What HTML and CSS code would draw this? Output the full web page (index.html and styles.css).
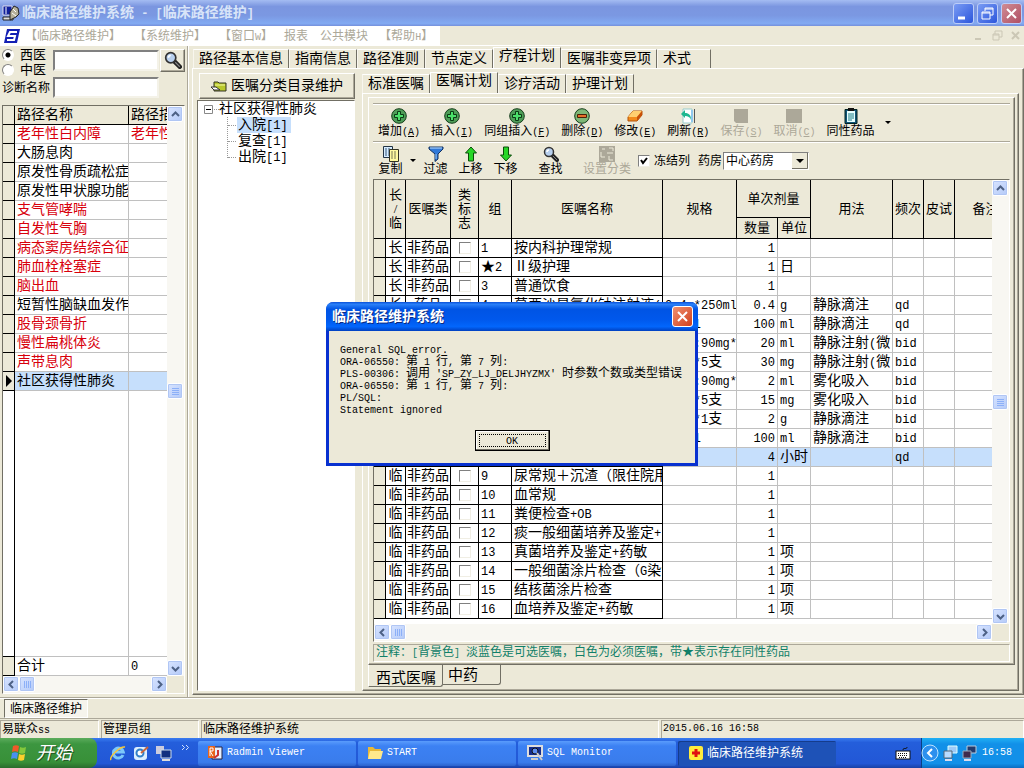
FILE: index.html
```html
<!DOCTYPE html>
<html lang="zh-CN">
<head>
    <meta charset="UTF-8">
    <title>临床路径维护系统</title>
    <link rel="stylesheet" href="styles.css">
</head>

<body>

<!-- Shared icons -->
<svg class="defs">
    <symbol id="i-up" viewBox="0 0 9 9"><path d="M1 6l3.500-3.500L8 6" fill="none" stroke="#4d6185" stroke-width="2"/></symbol>
    <symbol id="i-down" viewBox="0 0 9 9"><path d="M1 3l3.500 3.500L8 3" fill="none" stroke="#4d6185" stroke-width="2"/></symbol>
    <symbol id="i-left" viewBox="0 0 9 9"><path d="M6 1L2.500 4.500 6 8" fill="none" stroke="#4d6185" stroke-width="2"/></symbol>
    <symbol id="i-right" viewBox="0 0 9 9"><path d="M3 1l3.500 3.500L3 8" fill="none" stroke="#4d6185" stroke-width="2"/></symbol>
    <symbol id="i-grip" viewBox="0 0 9 9"><path d="M1 1.500h7M1 3.500h7M1 5.500h7M1 7.500h7" stroke="#8cb0f8"/></symbol>
    <symbol id="i-griph" viewBox="0 0 9 9"><path d="M1.500 1v7M3.500 1v7M5.500 1v7M7.500 1v7" stroke="#8cb0f8"/></symbol>
    <symbol id="i-find" viewBox="0 0 16 16">
        <path d="M9 9l5 5" stroke="#222" stroke-width="4" stroke-linecap="round"/>
        <path d="M10 10l4 4" stroke="#888" stroke-width="1"/>
        <circle cx="6" cy="6" r="4.500" fill="#b8d0ee" stroke="#333" stroke-width="1.500"/>
        <path d="M4 6a2 2 0 0 1 2-2" stroke="#fff" stroke-width="1.500" fill="none"/>
    </symbol>
    <symbol id="i-add" viewBox="0 0 16 16">
        <circle cx="8" cy="8" r="7.300" fill="#4f9d58" stroke="#153d1b"/>
        <path d="M6.500 3.500h3v3h3v3h-3v3h-3v-3h-3v-3h3z" fill="#4be06a" stroke="#0b3b14"/>
    </symbol>
    <symbol id="i-del" viewBox="0 0 16 16">
        <circle cx="8" cy="8" r="7.300" fill="#7fb877" stroke="#153d1b"/>
        <path d="M3.500 6.500h9v3h-9z" fill="#e5702a" stroke="#4b2008"/>
    </symbol>
    <symbol id="i-edit" viewBox="0 0 16 16">
        <path d="M1 9l5-6h9v4l-5 6H1z" fill="#f28a1c" stroke="#b25408"/>
        <path d="M1 9l5-6h9l-5 6z" fill="#ffcf70"/>
        <path d="M10 9l5-6v4l-5 6z" fill="#c8500a"/>
    </symbol>
    <symbol id="i-refresh" viewBox="0 0 16 16">
        <path d="M3 1h9v14H3z" fill="#fff" stroke="#9cc"/>
        <path d="M14.500 1v14" stroke="#555"/><path d="M12 2v12" stroke="#8fc8ee" stroke-width="2"/>
        <path d="M1 6l4-4v3c4 0 6 2 6 7-1-3-3-4-6-4v2z" fill="#20b890"/>
    </symbol>
    <symbol id="i-clip" viewBox="0 0 16 16">
        <path d="M2 1.500h12v14H2z" fill="#157" stroke="#022"/>
        <path d="M4 3h8v11H4z" fill="#e8ffff"/><path d="M5 0h6v3H5z" fill="#111"/>
        <path d="M5 6h6M5 8h6M5 10h6M5 12h4" stroke="#1a7c86"/>
    </symbol>
    <symbol id="i-copy" viewBox="0 0 16 16">
        <path d="M.5.500h9v11h-9z" fill="#d6ecff" stroke="#234"/>
        <path d="M2 3h6M2 5h6M2 7h4M2 9h4" stroke="#357" stroke-dasharray="2 1"/>
        <path d="M6.500 3.500h9v12h-9z" fill="#fff9a0" stroke="#332"/>
        <path d="M8 6h6M8 8h6M8 10h6M8 12h6" stroke="#775" stroke-dasharray="2 1"/>
    </symbol>
    <symbol id="i-filter" viewBox="0 0 16 16">
        <path d="M1 1h14v2L10 8v5l-3 2.500V8L1 3z" fill="#2f78d8" stroke="#12315f"/>
        <path d="M2 2h12" stroke="#bfe0ff"/><path d="M8 8v5" stroke="#9cf"/>
    </symbol>
    <symbol id="i-moveup" viewBox="0 0 16 16"><path d="M8 1l5.500 6H10.500v8h-5V7H2.500z" fill="#27d627" stroke="#0a4d0a"/></symbol>
    <symbol id="i-movedn" viewBox="0 0 16 16"><path d="M8 15L2.500 9h3V1h5v8h3z" fill="#27d627" stroke="#0a4d0a"/></symbol>
    <symbol id="i-class" viewBox="0 0 16 16"><path d="M0 0h16v16H0z" fill="#aca899"/><path d="M3 3h3M10 2h4v3M2 6v5h4M8 7h6M10 10v4h4" stroke="#ece9d8" fill="none"/></symbol>
</svg>

<header class="titlebar">
    <svg width="18" height="18" viewBox="0 0 18 18">
        <path d="M1 2h9v9H1z" fill="#10209c" stroke="#dde"/><path d="M4 3v7" stroke="#fff"/>
        <path d="M1 13h10v3H1z" fill="#ddd" stroke="#222"/>
        <path d="M8 8l4-6 4 2 1 6-3 3-6 3z" fill="#b5b09a" stroke="#222"/><path d="M11 5l3 3M10 9l4 3" stroke="#fff"/>
    </svg>
    <h1>临床路径维护系统<span class="mono14"> - [</span>临床路径维护<span class="mono14">]</span></h1>
    <button class="wbtn" aria-label="最小化"><svg width="19" height="19"><path d="M4 14h7" stroke="#fff" stroke-width="3"/></svg></button>
    <button class="wbtn" aria-label="还原"><svg width="19" height="19"><path d="M7 7V4h8v7h-3M7 5h8M4 8h8v7H4zM4 9h8" stroke="#fff" fill="none"/></svg></button>
    <button class="wbtn close" aria-label="关闭"><svg width="19" height="19"><path d="M5 5l9 9M14 5l-9 9" stroke="#fff" stroke-width="2"/></svg></button>
</header>

<nav class="menubar">
    <div class="menus">
        <svg width="18" height="16" viewBox="0 0 18 16"><path d="M4 1h13l-3 14H1z" fill="#1420b4"/><path d="M14 4H7L5 8h7l-1 4H4" stroke="#fff" stroke-width="2" fill="none"/></svg>
        <a href="#">【临床路径维护】</a>
        <a href="#">【系统维护】</a>
        <a href="#">【窗口<span class="mono12">W</span>】</a>
        <a href="#" class="plain">报表</a>
        <a href="#" class="plain next">公共模块</a>
        <a href="#">【帮助<span class="mono12">H</span>】</a>
    </div>
    <svg width="48" height="12" viewBox="0 0 48 12"><path d="M2 9h6" stroke="#cbc7b5" stroke-width="2"/><path d="M22 4V1h7v6h-3M20 4h6v6h-6zM20 5h6" stroke="#cbc7b5" fill="none"/><path d="M39 2l7 7M46 2l-7 7" stroke="#cbc7b5" stroke-width="2"/></svg>
</nav>

<main class="work">

    <!-- Path list -->
    <section class="side">
        <form class="search">
            <div class="kinds">
                <label><input type="radio" name="kind" checked>西医</label>
                <label><input type="radio" name="kind">中医</label>
            </div>
            <input type="text" class="box" aria-label="路径">
            <button type="button" class="findbtn" aria-label="查找"><svg width="18" height="18"><use href="#i-find"/></svg></button>
            <label for="diag">诊断名称</label>
            <input type="text" class="box" id="diag">
        </form>
        <div class="scrollgrid">
            <div class="view">
                <table class="paths">
                    <colgroup><col class="c-gut"><col class="c-pname"><col></colgroup>
                    <thead><tr><th></th><th>路径名称</th><th>路径描述</th></tr></thead>
                    <tbody>
                        <tr class="red"><td></td><td>老年性白内障</td><td>老年性白内障</td></tr>
                        <tr><td></td><td>大肠息肉</td><td></td></tr>
                        <tr><td></td><td>原发性骨质疏松症</td><td></td></tr>
                        <tr><td></td><td>原发性甲状腺功能</td><td></td></tr>
                        <tr class="red"><td></td><td>支气管哮喘</td><td></td></tr>
                        <tr class="red"><td></td><td>自发性气胸</td><td></td></tr>
                        <tr class="red"><td></td><td>病态窦房结综合征</td><td></td></tr>
                        <tr class="red"><td></td><td>肺血栓栓塞症</td><td></td></tr>
                        <tr class="red"><td></td><td>脑出血</td><td></td></tr>
                        <tr><td></td><td>短暂性脑缺血发作</td><td></td></tr>
                        <tr class="red"><td></td><td>股骨颈骨折</td><td></td></tr>
                        <tr class="red"><td></td><td>慢性扁桃体炎</td><td></td></tr>
                        <tr class="red"><td></td><td>声带息肉</td><td></td></tr>
                        <tr class="sel"><td><svg width="7" height="12"><path d="M1 0l6 6-6 6z"/></svg></td><td>社区获得性肺炎</td><td></td></tr>
                        <tr class="fill"><td></td><td></td><td></td></tr>
                    </tbody>
                    <tfoot><tr><td></td><td>合计</td><td><span class="mono14">0</span></td></tr></tfoot>
                </table>
            </div>
            <div class="vbar">
                <button class="sb" aria-label="上"><svg width="9" height="9"><use href="#i-up"/></svg></button>
                <span class="track pos-a"><button class="sb" aria-label="滚动"><svg width="9" height="9"><use href="#i-grip"/></svg></button></span>
                <button class="sb" aria-label="下"><svg width="9" height="9"><use href="#i-down"/></svg></button>
            </div>
            <div class="hbar">
                <button class="sb" aria-label="左"><svg width="9" height="9"><use href="#i-left"/></svg></button>
                <button class="sb" aria-label="滚动"><svg width="9" height="9"><use href="#i-griph"/></svg></button>
                <span class="track"></span>
                <button class="sb" aria-label="右"><svg width="9" height="9"><use href="#i-right"/></svg></button>
            </div>
        </div>
    </section>

    <section class="pages">
        <div class="tabs">
            <button>路径基本信息</button><button>指南信息</button><button>路径准则</button><button>节点定义</button><button class="on">疗程计划</button><button>医嘱非变异项</button><button class="last">术式</button>
        </div>
        <div class="page outer">

            <!-- Catalogue tree -->
            <div class="catalog">
                <button class="catbtn">
                    <svg width="16" height="14" viewBox="0 0 16 14"><path d="M3 3h4l1 1h7v8H3z" fill="#b8c82c" stroke="#332"/><path d="M4 6h10" stroke="#f4f9a0"/><path d="M0 8h5l4 3H3z" fill="#fff" stroke="#333"/></svg>
                    医嘱分类目录维护
                </button>
                <div class="tree">
                    <div class="root"><svg width="15" height="16"><path d="M.5 4.500h8v8h-8z" fill="#fff" stroke="#888"/><path d="M2 8.500h5" stroke="#000"/><path d="M10 8.500h5" stroke="#999" stroke-dasharray="1 1"/></svg>社区获得性肺炎</div>
                    <ul>
                        <li><span class="hit">入院<span class="mono14">[1]</span></span></li>
                        <li><span>复查<span class="mono14">[1]</span></span></li>
                        <li><span>出院<span class="mono14">[1]</span></span></li>
                    </ul>
                </div>
            </div>

            <div class="plan">
                <div class="tabs">
                    <button>标准医嘱</button><button class="on">医嘱计划</button><button>诊疗活动</button><button>护理计划</button>
                </div>
                <div class="page mid">
                    <div class="page inner">

                        <div class="toolbar">
                            <button><svg width="16" height="16"><use href="#i-add"/></svg><span>增加<i>(<u>A</u>)</i></span></button>
                            <button><svg width="16" height="16"><use href="#i-add"/></svg><span>插入<i>(<u>I</u>)</i></span></button>
                            <button><svg width="16" height="16"><use href="#i-add"/></svg><span>同组插入<i>(<u>F</u>)</i></span></button>
                            <button><svg width="16" height="16"><use href="#i-del"/></svg><span>删除<i>(<u>D</u>)</i></span></button>
                            <button><svg width="16" height="16"><use href="#i-edit"/></svg><span>修改<i>(<u>E</u>)</i></span></button>
                            <button><svg width="16" height="16"><use href="#i-refresh"/></svg><span>刷新<i>(<u>R</u>)</i></span></button>
                            <button disabled><svg width="16" height="16"><path d="M1 1h14v14H3l-2-2z" fill="#aca899"/></svg><span>保存<i>(<u>S</u>)</i></span></button>
                            <button disabled><svg width="16" height="16"><path d="M0 1h16v14H0z" fill="#aca899"/></svg><span>取消<i>(<u>C</u>)</i></span></button>
                            <button><svg width="16" height="16"><use href="#i-clip"/></svg><span>同性药品</span></button>
                            <span class="drop"></span>
                        </div>
                        <div class="toolbar second">
                            <button><svg width="16" height="16"><use href="#i-copy"/></svg><span>复制</span></button>
                            <span class="drop"></span>
                            <button><svg width="16" height="16"><use href="#i-filter"/></svg><span>过滤</span></button>
                            <button><svg width="16" height="16"><use href="#i-moveup"/></svg><span>上移</span></button>
                            <button><svg width="16" height="16"><use href="#i-movedn"/></svg><span>下移</span></button>
                            <button class="apart"><svg width="16" height="16"><use href="#i-find"/></svg><span>查找</span></button>
                            <button class="apart" disabled><svg width="16" height="16"><use href="#i-class"/></svg><span>设置分类</span></button>
                            <label class="freeze"><input type="checkbox" checked>冻结列</label>
                            <label for="store">药房</label>
                            <select id="store"><option>中心药房</option></select>
                        </div>

                        <div class="scrollgrid orders-box">
                            <div class="view">
                                <table class="orders">
                                    <colgroup>
                                        <col class="w11"><col class="w21"><col class="w45"><col class="w28"><col class="w33"><col class="w151"><col class="w74">
                                        <col class="w41"><col class="w33"><col class="w82"><col class="w31"><col class="w31"><col>
                                    </colgroup>
                                    <thead>
                                        <tr>
                                            <th rowspan="2"></th><th rowspan="2">长<br>/<br>临</th><th rowspan="2">医嘱类</th><th rowspan="2">类<br>标<br>志</th>
                                            <th rowspan="2">组</th><th rowspan="2">医嘱名称</th><th rowspan="2">规格</th><th colspan="2">单次剂量</th>
                                            <th rowspan="2">用法</th><th rowspan="2">频次</th><th rowspan="2">皮试</th><th rowspan="2">备注</th>
                                        </tr>
                                        <tr><th>数量</th><th>单位</th></tr>
                                    </thead>
                                    <tbody id="orders"></tbody>
                                </table>
                            </div>
                            <div class="vbar">
                                <button class="sb" aria-label="上"><svg width="9" height="9"><use href="#i-up"/></svg></button>
                                <span class="track pos-b"><button class="sb" aria-label="滚动"><svg width="9" height="9"><use href="#i-grip"/></svg></button></span>
                                <button class="sb" aria-label="下"><svg width="9" height="9"><use href="#i-down"/></svg></button>
                            </div>
                            <div class="hbar">
                                <button class="sb" aria-label="左"><svg width="9" height="9"><use href="#i-left"/></svg></button>
                                <button class="sb" aria-label="滚动"><svg width="9" height="9"><use href="#i-griph"/></svg></button>
                                <span class="track"></span>
                                <button class="sb" aria-label="右"><svg width="9" height="9"><use href="#i-right"/></svg></button>
                            </div>
                        </div>
                        <p class="note">注释：<span class="mono12">[</span>背景色<span class="mono12">] </span>淡蓝色是可选医嘱，白色为必须医嘱，带★表示存在同性药品</p>
                    </div>
                    <div class="foot-tabs"><button class="on">西式医嘱</button><button>中药</button></div>
                </div>
            </div>
        </div>
    </section>
</main>

<div class="windows"><button>临床路径维护</button></div>

<footer class="status">
    <span>易联众<span class="mono12">ss</span></span><span>管理员组</span><span>临床路径维护系统</span><span class="mono12">2015.06.16 16:58</span>
</footer>

<div class="taskbar">
    <button class="start">
        <svg width="20" height="18" viewBox="0 0 20 18"><path d="M3 2c2-1 4-1 6 0L8 8c-2-1-4-1-6 0z" fill="#f0592a"/><path d="M10 3c2 1 4 1 6 0l-1 6c-2 1-4 1-6 0z" fill="#84c83c"/><path d="M2 9c2-1 4-1 6 0l-1 6c-2-1-4-1-6 0z" fill="#4a90f0"/><path d="M9 10c2 1 4 1 6 0l-1 6c-2 1-4 1-6 0z" fill="#fcd02c"/></svg>
        开始
    </button>
    <div class="quick">
        <svg width="18" height="18" viewBox="0 0 18 18"><path d="M14 11a5 5 0 1 1 .3-3H5" fill="none" stroke="#7cc8fa" stroke-width="3"/><path d="M2 16c-2-3 9-14 14-13" fill="none" stroke="#f8c838" stroke-width="1.500"/></svg>
        <svg width="18" height="18" viewBox="0 0 18 18"><rect x="2" y="3" width="13" height="13" rx="3" fill="#dcefff"/><circle cx="8" cy="9" r="3.500" fill="#fff" stroke="#3280c8" stroke-width="2"/><path d="M9 9l7-6" stroke="#c8643c" stroke-width="2"/></svg>
        <svg width="18" height="18" viewBox="0 0 18 18"><path d="M1 2h8v8H1z" fill="#ccd"/><path d="M6 6h10v8H6z" fill="#103080" stroke="#cde"/><path d="M7 16h8" stroke="#ddd" stroke-width="2"/></svg>
        <svg class="more" width="9" height="7" viewBox="0 0 9 7"><path d="M1 1l2.500 2.500L1 6M5 1l2.500 2.500L5 6" fill="none" stroke="#cfe0ff"/></svg>
    </div>
    <div class="tasks">
        <button><svg width="16" height="16" viewBox="0 0 16 16"><path d="M5 2h10v12H5z" fill="#e8f0ff" stroke="#224"/><path d="M1 1h7v12H1z" fill="#e8641c"/><path d="M3 11V3h3v3H3l3 5" stroke="#fff" fill="none"/><path d="M11 5v5l-4 3" stroke="#c33" fill="none" stroke-width="2"/></svg><span class="mono12">Radmin Viewer</span></button>
        <button><svg width="16" height="16" viewBox="0 0 16 16"><path d="M1 2h5l2 2h6v10H1z" fill="#e8b838"/><path d="M3 6h13l-2 8H1z" fill="#ffe88c"/></svg><span class="mono12">START</span></button>
        <button><svg width="16" height="16" viewBox="0 0 16 16"><path d="M1 1h14v10H1z" fill="#142c8c" stroke="#ddd" stroke-width="2"/><circle cx="8" cy="6" r="3" fill="#5c8cf0" stroke="#111"/><path d="M10 8l5 7M4 14h7" stroke="#ccc" stroke-width="2"/></svg><span class="mono12">SQL Monitor</span></button>
        <button class="on"><svg width="14" height="14" viewBox="0 0 14 14"><rect width="14" height="14" rx="2" fill="#ffec3c"/><path d="M7 3v8M3 7h8" stroke="#e01010" stroke-width="3"/></svg><span>临床路径维护系统</span></button>
    </div>
    <svg class="kbd" width="16" height="14" viewBox="0 0 16 14"><path d="M8 4c0-3 4 0 4-3" stroke="#111" fill="none"/><rect x="1" y="5" width="14" height="8" fill="#fff" stroke="#111"/><path d="M3 7.500h10M3 9.500h10M4 11.500h8" stroke="#111" stroke-dasharray="1 1"/></svg>
    <div class="tray">
        <svg class="fold" width="18" height="18" viewBox="0 0 18 18"><circle cx="9" cy="9" r="8" fill="#2c90ee" stroke="#bfe4ff"/><path d="M11 5L7 9l4 4" stroke="#fff" stroke-width="2" fill="none"/></svg>
        <svg width="15" height="16" viewBox="0 0 15 16"><path d="M5 1h9v7H5z" fill="#9ccaf8" stroke="#dff"/><path d="M1 6h8v7H1z" fill="#b8dcff" stroke="#567"/><path d="M2 15h7" stroke="#dde" stroke-width="2"/></svg>
        <svg width="15" height="16" viewBox="0 0 15 16"><path d="M5 1h9v7H5z" fill="#223a6c" stroke="#bcd"/><path d="M1 6h8v7H1z" fill="#402a4c" stroke="#9ab"/><path d="M2 15h7" stroke="#dde" stroke-width="2"/></svg>
        <span class="mono12">16:58</span>
    </div>
</div>

<!-- Error message -->
<div class="overlay">
    <div class="dialog" role="alertdialog" aria-labelledby="dlgtitle">
        <div class="dlg-head"><h2 id="dlgtitle">临床路径维护系统</h2><button class="wbtn close" aria-label="关闭"><svg width="19" height="19"><path d="M5 5l9 9M14 5l-9 9" stroke="#fff" stroke-width="2"/></svg></button></div>
        <div class="dlg-body">
            <p id="message">General SQL error.
ORA-06550: 第 1 行, 第 7 列:
PLS-00306: 调用 'SP_ZY_LJ_DELJHYZMX' 时参数个数或类型错误
ORA-06550: 第 1 行, 第 7 列:
PL/SQL:
Statement ignored</p>
            <button class="ok"><span class="mono12">OK</span></button>
        </div>
    </div>
</div>

<script>
    // 长/临, 医嘱类, 组, 名称, 规格, 数量, 单位, 用法, 频次
    const orders = [
        ["长", "非药品", "1", "按内科护理常规", "", "1", "", "", ""],
        ["长", "非药品", "★2", "Ⅱ级护理", "", "1", "日", "", ""],
        ["长", "非药品", "3", "普通饮食", "", "1", "", "", ""],
        ["长", "药品", "4", "莫西沙星氯化钠注射液(", "0.4g*250ml", "0.4", "g", "静脉滴注", "qd"],
        ["长", "药品", "5", "氯化钠注射液", "100ml", "100", "ml", "静脉滴注", "qd"],
        ["长", "药品", "5", "氯化钠注射液", "10ml:90mg*", "20", "ml", "静脉注射(微", "bid"],
        ["长", "药品", "5", "氨溴索注射液", "30mg*5支", "30", "mg", "静脉注射(微", "bid"],
        ["长", "药品", "6", "氯化钠注射液", "10ml:90mg*", "2", "ml", "雾化吸入", "bid"],
        ["长", "药品", "6", "氨溴索注射液", "15mg*5支", "15", "mg", "雾化吸入", "bid"],
        ["长", "药品", "7", "头孢注射液", "1.5g*1支", "2", "g", "静脉滴注", "bid"],
        ["长", "药品", "7", "氯化钠注射液", "100ml", "100", "ml", "静脉滴注", "bid"],
        ["长", "非药品", "8", "吸氧", "", "4", "小时", "", "qd"],
        ["临", "非药品", "9", "尿常规＋沉渣（限住院用）", "", "1", "", "", ""],
        ["临", "非药品", "10", "血常规", "", "1", "", "", ""],
        ["临", "非药品", "11", "粪便检查+OB", "", "1", "", "", ""],
        ["临", "非药品", "12", "痰一般细菌培养及鉴定+", "", "1", "", "", ""],
        ["临", "非药品", "13", "真菌培养及鉴定+药敏", "", "1", "项", "", ""],
        ["临", "非药品", "14", "一般细菌涂片检查（G染色）", "", "1", "项", "", ""],
        ["临", "非药品", "15", "结核菌涂片检查", "", "1", "项", "", ""],
        ["临", "非药品", "16", "血培养及鉴定+药敏", "", "1", "项", "", ""]
    ];

    // Latin runs are set in the half-width face
    function halfWidth(text, cls) {
        return text.replace(/[ -~]+/g, m => `<span class="${cls}">${m}</span>`);
    }

    document.getElementById("orders").innerHTML = orders.map((row, i) => {
        const [term, kind, ...rest] = row.map(t => halfWidth(t, "mono14"));
        const cells = rest.map((t, n) => `<td${n === 3 ? ' class="num"' : ""}>${t}</td>`).join("");
        return `<tr${i === 11 ? ' class="sel"' : ""}><td></td><td>${term}</td><td>${kind}</td>` +
            `<td><input type="checkbox" aria-label="类标志"></td>${cells}<td></td><td></td></tr>`;
    }).join("");

    const message = document.getElementById("message");
    message.innerHTML = halfWidth(message.textContent, "mono12");
</script>

</body>
</html>
```

FILE: styles.css
```css
* {
    box-sizing: border-box;
}
body {
    margin: 0;
    height: 100vh;
    display: flex;
    flex-direction: column;
    overflow: hidden;
    background: #ece9d8;
    color: #000;
    font-family: "Liberation Serif", "Noto Sans CJK SC", sans-serif;
    font-size: 12px;
    line-height: 14px;
}
button, input, select {
    font: inherit;
    color: inherit;
    margin: 0;
    padding: 0;
    border: 0;
    border-radius: 0;
}
button {
    background: none;
    white-space: nowrap;
}
svg {
    display: block;
    flex: none;
}
h1, h2, p, ul {
    margin: 0;
    padding: 0;
}
a {
    color: inherit;
    text-decoration: none;
}
.defs {
    display: none;
}
.mono14 {
    font-family: "Liberation Mono", monospace;
    font-size: 12px;
}
.mono12 {
    font-family: "Liberation Mono", monospace;
    font-size: 10px;
}

/* Title and menu */
.titlebar {
    flex: none;
    height: 26px;
    display: flex;
    align-items: center;
    gap: 2px;
    padding: 0 2px;
    background: linear-gradient(#a4bcf2, #7b96e0 25%, #7b98e2 60%, #82aaf2 90%, #7590dc);
}
.titlebar h1 {
    flex: 1;
    font-size: 14px;
    color: #d8e4f8;
    white-space: pre;
}
.wbtn {
    width: 21px;
    height: 21px;
    border: 1px solid #fff;
    border-radius: 3px;
    background: linear-gradient(135deg, #7a9cf4, #2c56dc);
}
.titlebar .wbtn {
    border-color: #bccdf8;
    margin-left: 1px;
}
.wbtn.close {
    background: linear-gradient(135deg, #f09070, #d0401c);
}
.titlebar .wbtn.close {
    background: linear-gradient(135deg, #d08c94, #b05064);
}
.menubar {
    flex: none;
    height: 20px;
    display: flex;
    justify-content: space-between;
    align-items: center;
    padding-right: 3px;
    border-bottom: 1px solid #fff;
    color: #aca899;
}
.menus {
    display: flex;
    align-items: center;
    height: 19px;
    width: 440px;
    padding-left: 3px;
    background: #fff;
    white-space: nowrap;
}
.menus a {
    height: 14px;
    margin-left: 4px;
    margin-right: 9px;
}
.menus .plain {
    margin: 0 0 0 2px;
}
.menus .next {
    margin: 0 7px 0 12px;
}

/* Side panel */
.work {
    flex: 1;
    min-height: 0;
    display: flex;
    gap: 4px;
}
.side {
    flex: none;
    width: 188px;
    padding: 2px 2px 3px;
    display: flex;
    flex-direction: column;
    gap: 6px;
    border-right: 1px solid #aca899;
    box-shadow: 1px 0 #fff;
}
.search {
    display: grid;
    grid-template-columns: 50px 1fr 25px;
    grid-template-rows: 24px 23px;
    align-items: center;
    row-gap: 4px;
    column-gap: 1px;
    height: 51px;
}
.kinds {
    line-height: 15px;
    font-size: 13px;
    padding-top: 4px;
}
.kinds label {
    display: flex;
    align-items: center;
    gap: 6px;
    height: 15px;
}
.kinds input {
    appearance: none;
    width: 12px;
    height: 12px;
    border: 1px solid;
    border-color: #808080 #fff #fff #808080;
    border-radius: 50%;
    background: #fff;
}
.kinds input:checked {
    background: radial-gradient(circle, #000 2px, #fff 3px);
}
.box {
    width: 100%;
    min-width: 0;
    height: 21px;
    background: #fff;
    border: 2px solid;
    border-color: #808080 #f4f2e8 #f4f2e8 #808080;
}
.findbtn, .catbtn {
    border: 1px solid;
    border-color: #fff #716f64 #716f64 #fff;
    box-shadow: inset -1px -1px #aca899;
}
.findbtn {
    height: 23px;
    padding-left: 3px;
}

/* Grids with XP scrollbars */
.scrollgrid {
    flex: 1;
    min-height: 0;
    display: grid;
    grid-template-columns: minmax(0, 1fr) 17px;
    grid-template-rows: minmax(0, 1fr) 17px;
    border: 1px solid #716f64;
    border-right-color: #fff;
    border-bottom-color: #fff;
}
.view {
    overflow: hidden;
    background: #fff;
}
.vbar, .hbar {
    display: flex;
    background: #f8f7f2;
}
.vbar {
    flex-direction: column;
}
.sb {
    flex: none;
    width: 16px;
    height: 16px;
    display: grid;
    place-items: center;
    border: 1px solid #fff;
    border-radius: 2px;
    background: linear-gradient(135deg, #d8e4ff, #b4caf8);
    box-shadow: inset 0 0 0 1px #b0c6f4;
}
.track {
    flex: 1;
}
.pos-a {
    padding-top: 261px;
}
.pos-b {
    padding-top: 198px;
}
table {
    table-layout: fixed;
    border-collapse: separate;
    border-spacing: 0;
    font-size: 14px;
    line-height: 16px;
}
th, td {
    padding: 0 0 0 2px;
    overflow: hidden;
    white-space: nowrap;
    font-weight: normal;
    text-align: left;
    border-right: 1px solid #c0c0c0;
    border-bottom: 1px solid #c0c0c0;
}
th {
    background: #ece9d8;
    border-color: #000;
}
td:first-child {
    background: #ece9d8;
    border-color: #000;
}
.paths {
    width: 100%;
    height: 100%;
}
.paths tr {
    height: 19px;
}
.paths .fill {
    height: auto;
}
.paths .fill td {
    background: #fff;
}
.paths th:last-child, .paths td:last-child {
    border-right: 0;
}
.c-gut {
    width: 12px;
}
.c-pname {
    width: 114px;
}
.red {
    color: #d8000c;
}
.sel td:not(:first-child) {
    background: #c6dffc;
}

/* Page controls */
.pages {
    flex: 1;
    min-width: 0;
    display: flex;
    flex-direction: column;
    padding-bottom: 2px;
}
.tabs {
    flex: none;
    display: flex;
    align-items: flex-end;
    height: 22px;
    padding-left: 1px;
    font-size: 14px;
    line-height: 16px;
}
.tabs button {
    height: 19px;
    padding: 0 5px;
    border: 1px solid;
    border-color: #fff #716f64 transparent #f8f6ee;
    border-bottom: 0;
}
.tabs .on {
    height: 21px;
    padding-bottom: 4px;
    border-color: #fff #716f64 #fff #fff;
}
.tabs .last {
    padding-right: 19px;
}
.page {
    flex: 1;
    min-height: 0;
    border: 1px solid;
    border-color: #fff #716f64 #716f64 #fff;
    box-shadow: inset -1px -1px #aca899;
}
.outer {
    display: flex;
    gap: 7px;
    padding: 4px 4px 3px;
}
.catalog {
    flex: none;
    width: 158px;
    display: flex;
    flex-direction: column;
}
.catbtn {
    flex: none;
    height: 26px;
    margin-left: 2px;
    display: flex;
    align-items: center;
    justify-content: center;
    gap: 4px;
    font-size: 14px;
}
.tree {
    flex: 1;
    margin-top: 1px;
    padding: 0 0 0 6px;
    background: #fff;
    border: 1px solid;
    border-color: #716f64 #fff #fff #716f64;
    font-size: 14px;
    line-height: 16px;
}
.root {
    display: flex;
}
.tree ul {
    list-style: none;
    margin-left: 23px;
    border-left: 1px dotted #999;
    height: 41px;
}
.tree li {
    display: flex;
    align-items: center;
    height: 16px;
}
.tree li::before {
    content: "";
    width: 8px;
    margin-right: 1px;
    border-top: 1px dotted #999;
}
.tree li > span {
    height: 16px;
    padding: 0 3px 0 1px;
}
.hit {
    background: #c6dffc;
}
.plan {
    flex: 1;
    min-width: 0;
    display: flex;
    flex-direction: column;
}
.plan .tabs {
    height: 20px;
    padding-left: 0;
}
.mid {
    display: flex;
    flex-direction: column;
    padding: 3px 3px 3px 5px;
}
.inner {
    display: flex;
    flex-direction: column;
    padding: 5px 4px 2px;
}

/* Toolbars */
.toolbar {
    flex: none;
    display: flex;
    align-items: center;
    gap: 1px;
    height: 38px;
    border-top: 1px solid #aca899;
    box-shadow: inset 0 1px #fff;
}
.toolbar button {
    display: flex;
    flex-direction: column;
    align-items: center;
    min-width: 35px;
    padding: 0 5px;
}
.toolbar span {
    height: 14px;
}
.second {
    gap: 0;
}
.toolbar i {
    font-family: "Liberation Mono", monospace;
    font-size: 10px;
    font-style: normal;
}
.toolbar button:disabled {
    color: #aca899;
}
.toolbar .apart {
    margin-left: 10px;
}
.toolbar .drop {
    height: 3px;
    margin: 0 4px;
    border: 3px solid transparent;
    border-top-color: #000;
    border-bottom: 0;
}
.second .drop {
    margin: 0 2px;
}
.freeze {
    display: flex;
    align-items: center;
    gap: 4px;
    margin: 0 8px 0 2px;
}
input[type="checkbox"] {
    appearance: none;
    width: 12px;
    height: 12px;
    background: #fff;
    border: 1px solid;
    border-color: #808080 #f0eee4 #f0eee4 #808080;
}
.freeze input:checked {
    background: #fff url("data:image/svg+xml,%3Csvg xmlns='http://www.w3.org/2000/svg' viewBox='0 0 10 10'%3E%3Cpath d='M2 4l2 3 4-5' fill='none' stroke='%23000' stroke-width='2'/%3E%3C/svg%3E");
}
.toolbar select {
    appearance: none;
    width: 86px;
    height: 18px;
    margin-left: 1px;
    padding-left: 2px;
    border: 1px solid;
    border-color: #808080 #fff #fff #808080;
    background: #fff url("data:image/svg+xml,%3Csvg xmlns='http://www.w3.org/2000/svg' width='16' height='16'%3E%3Cpath d='M0 0h16v16H0z' fill='%23ece9d8'/%3E%3Cpath d='M15.500 0v15.500H0' fill='none' stroke='%23716f64'/%3E%3Cpath d='M4 6h8l-4 4z'/%3E%3C/svg%3E") no-repeat right center;
}

/* Orders grid */
.orders {
    width: 643px;
    min-width: 100%;
}
.w11 { width: 12px; }
.w21 { width: 20px; }
.w45 { width: 45px; }
.w28 { width: 28px; }
.w33 { width: 33px; }
.w151 { width: 151px; }
.w74 { width: 74px; }
.w41 { width: 41px; }
.w82 { width: 82px; }
.w31 { width: 31px; }
.orders th {
    padding: 0;
    text-align: center;
    font-size: 13px;
    line-height: 14px;
}
.orders thead tr:first-child {
    height: 38px;
}
.orders thead tr + tr {
    height: 21px;
}
.orders tbody tr {
    height: 19px;
}
.orders td:nth-child(-n+6) {
    border-color: #000;
}
.orders td:nth-child(2), .orders td:nth-child(3), .orders td:nth-child(4) {
    padding: 0;
    text-align: center;
}
.orders td input {
    display: block;
    margin: 0 auto;
}
.orders .num {
    text-align: right;
    padding-right: 2px;
}
.note {
    flex: none;
    height: 18px;
    margin-top: 2px;
    padding-left: 2px;
    line-height: 14px;
    border: 1px solid;
    border-color: #aca899 #fff #fff #aca899;
    color: #108068;
    white-space: nowrap;
}
.foot-tabs {
    flex: none;
    display: flex;
    align-items: flex-start;
    height: 22px;
    font-size: 15px;
}
.foot-tabs button {
    height: 20px;
    padding: 0 22px 0 5px;
    border: 1px solid #716f64;
    border-top: 0;
    border-left: 0;
    border-radius: 0 0 3px 0;
}
.foot-tabs .on {
    height: 22px;
    padding: 4px 6px 0 7px;
    border-left: 1px solid #fff;
}

/* Window list, status and taskbar */
.windows {
    flex: none;
    height: 21px;
    padding: 1px 4px 0;
    border-top: 1px solid #aca899;
    box-shadow: inset 0 1px #fff;
}
.windows button {
    height: 19px;
    padding: 0 5px;
    border: 1px solid;
    border-color: #716f64 #fff #fff #716f64;
    background: #f6f4ec;
}
.status {
    flex: none;
    height: 20px;
    display: grid;
    grid-template-columns: 99px 98px 1fr 363px;
    gap: 2px;
    border-top: 1px solid #aca899;
    padding: 1px 0;
}
.status > span {
    padding-left: 1px;
    line-height: 16px;
    border: 1px solid;
    border-color: #aca899 #fff #fff #aca899;
}
.taskbar {
    flex: none;
    height: 30px;
    display: flex;
    align-items: center;
    color: #fff;
    background: linear-gradient(#3a7cf0, #245edb 15%, #2257d6 85%, #1941a5);
}
.start {
    width: 97px;
    height: 30px;
    display: flex;
    align-items: center;
    gap: 6px;
    padding-left: 10px;
    border-radius: 0 8px 8px 0;
    background: linear-gradient(#5cac5c, #3c9640 20%, #389038 80%, #2a6c2c);
    font-size: 18px;
    font-style: italic;
    text-shadow: 1px 1px #225522;
}
.quick {
    width: 101px;
    display: flex;
    align-items: center;
    gap: 5px;
    padding-left: 12px;
}
.more {
    align-self: flex-start;
    margin-left: 3px;
}
.tasks {
    flex: 1;
    min-width: 0;
    display: flex;
    gap: 2px;
}
.tasks button {
    flex: 0 1 158px;
    height: 25px;
    display: flex;
    align-items: center;
    gap: 4px;
    padding-left: 9px;
    border-radius: 2px;
    background: linear-gradient(#5a9cfc, #3c81f3 20%, #3a7cec 85%, #2c62cc);
}
.tasks .on {
    padding-left: 11px;
    background: #1e52b7;
    box-shadow: inset 1px 1px #153c8c;
}
.kbd {
    margin-right: 10px;
}
.tray {
    width: 103px;
    height: 30px;
    display: flex;
    align-items: center;
    gap: 4px;
    padding-right: 12px;
    background: linear-gradient(#20b0f4, #1290e8 20%, #1290e8 85%, #0c6cc0);
    box-shadow: inset 1px 0 #093f84;
}
.tray span {
    margin-left: auto;
}

/* Message box */
.overlay {
    position: fixed;
    inset: 0;
    display: grid;
    place-items: center;
}
.dialog {
    width: 372px;
    border: 3px solid #0831d0;
    border-top: 0;
    border-radius: 8px 8px 0 0;
    background: #ece9d8;
}
.dlg-head {
    display: flex;
    align-items: center;
    justify-content: space-between;
    height: 29px;
    margin: 0 -3px;
    padding: 0 5px 0 6px;
    border-radius: 7px 7px 0 0;
    background: linear-gradient(#0a50d8, #2a80f8 8%, #0054e4 25%, #0058ec 60%, #0266fc 85%, #0040c0);
}
.dlg-head h2 {
    font-size: 14px;
    color: #fff;
    text-shadow: 1px 1px #0a2a80;
}
.dlg-body {
    padding: 12px 11px 12px;
    text-align: center;
}
#message {
    text-align: left;
    white-space: pre;
    line-height: 12px;
    margin-bottom: 15px;
}
#message span {
    line-height: 0;
}
.ok {
    display: block;
    margin: 0 auto;
    width: 75px;
    height: 21px;
    border: 1px solid #000;
    box-shadow: inset -1px -1px #716f64, inset 1px 1px #fff;
    outline: 1px dotted #000;
    outline-offset: -5px;
}
```
